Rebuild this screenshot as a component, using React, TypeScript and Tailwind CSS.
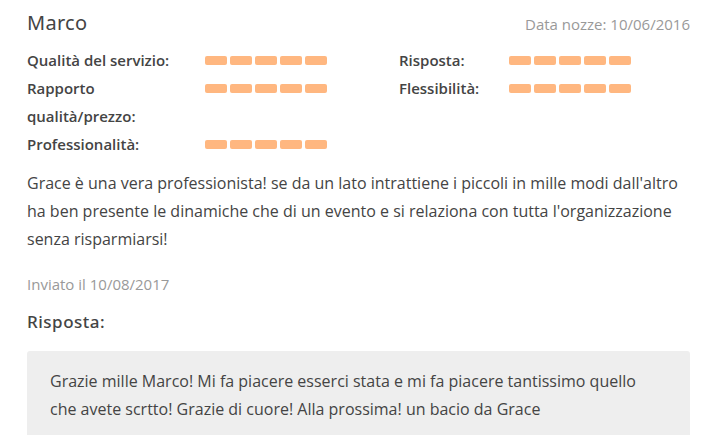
import React from "react";

const Bars = () => (
  <div className="flex gap-[3px]">
    {[0, 1, 2, 3, 4].map((i) => (
      <div key={i} className="w-[22px] h-[9px] rounded-[2px] bg-[#ffb780]" />
    ))}
  </div>
);

const Label = ({ children }: { children: React.ReactNode }) => (
  <div className="text-[15px] font-semibold text-[#444] leading-[28px]">{children}</div>
);

export default function App() {
  const font = { fontFamily: '"Open Sans", sans-serif' };
  return (
    <div className="w-[720px] h-[435px] bg-white overflow-hidden pl-[27px] pr-[30px]" style={font}>
      <div className="flex items-baseline justify-between pt-[8px]">
        <div className="text-[20px] text-[#444] tracking-[0.3px]" style={{ fontFamily: '"Noto Sans", sans-serif' }}>Marco</div>
        <div className="text-[15px] text-[#999]">Data nozze: 10/06/2016</div>
      </div>
      <div className="grid grid-cols-[178px_194px_110px_1fr] mt-[8px]">
        <Label>Qualità del servizio:</Label>
        <div className="pt-[10px]"><Bars /></div>
        <Label>Risposta:</Label>
        <div className="pt-[10px]"><Bars /></div>
        <Label>Rapporto<br />qualità/prezzo:</Label>
        <div className="pt-[10px]"><Bars /></div>
        <Label>Flessibilità:</Label>
        <div className="pt-[10px]"><Bars /></div>
        <Label>Professionalità:</Label>
        <div className="pt-[10px]"><Bars /></div>
      </div>
      <p className="mt-[11px] text-[16px] leading-[28px] text-[#444]">
        Grace è una vera professionista! se da un lato intrattiene i piccoli in mille modi dall'altro ha ben presente le dinamiche che di un evento e si relaziona con tutta l'organizzazione senza risparmiarsi!
      </p>
      <div className="mt-[20px] text-[15px] text-[#999]">Inviato il 10/08/2017</div>
      <div className="mt-[13px] text-[17px] font-medium tracking-[0.5px] text-[#444]" style={{ fontFamily: '"Noto Sans", sans-serif' }}>Risposta:</div>
      <div className="mt-[17px] bg-[#eeeeee] rounded-[3px] px-[23px] pt-[16px] pb-[20px]">
        <p className="text-[16px] leading-[28px] text-[#444]">
          Grazie mille Marco! Mi fa piacere esserci stata e mi fa piacere tantissimo quello<br />che avete scrtto! Grazie di cuore! Alla prossima! un bacio da Grace
        </p>
      </div>
    </div>
  );
}
